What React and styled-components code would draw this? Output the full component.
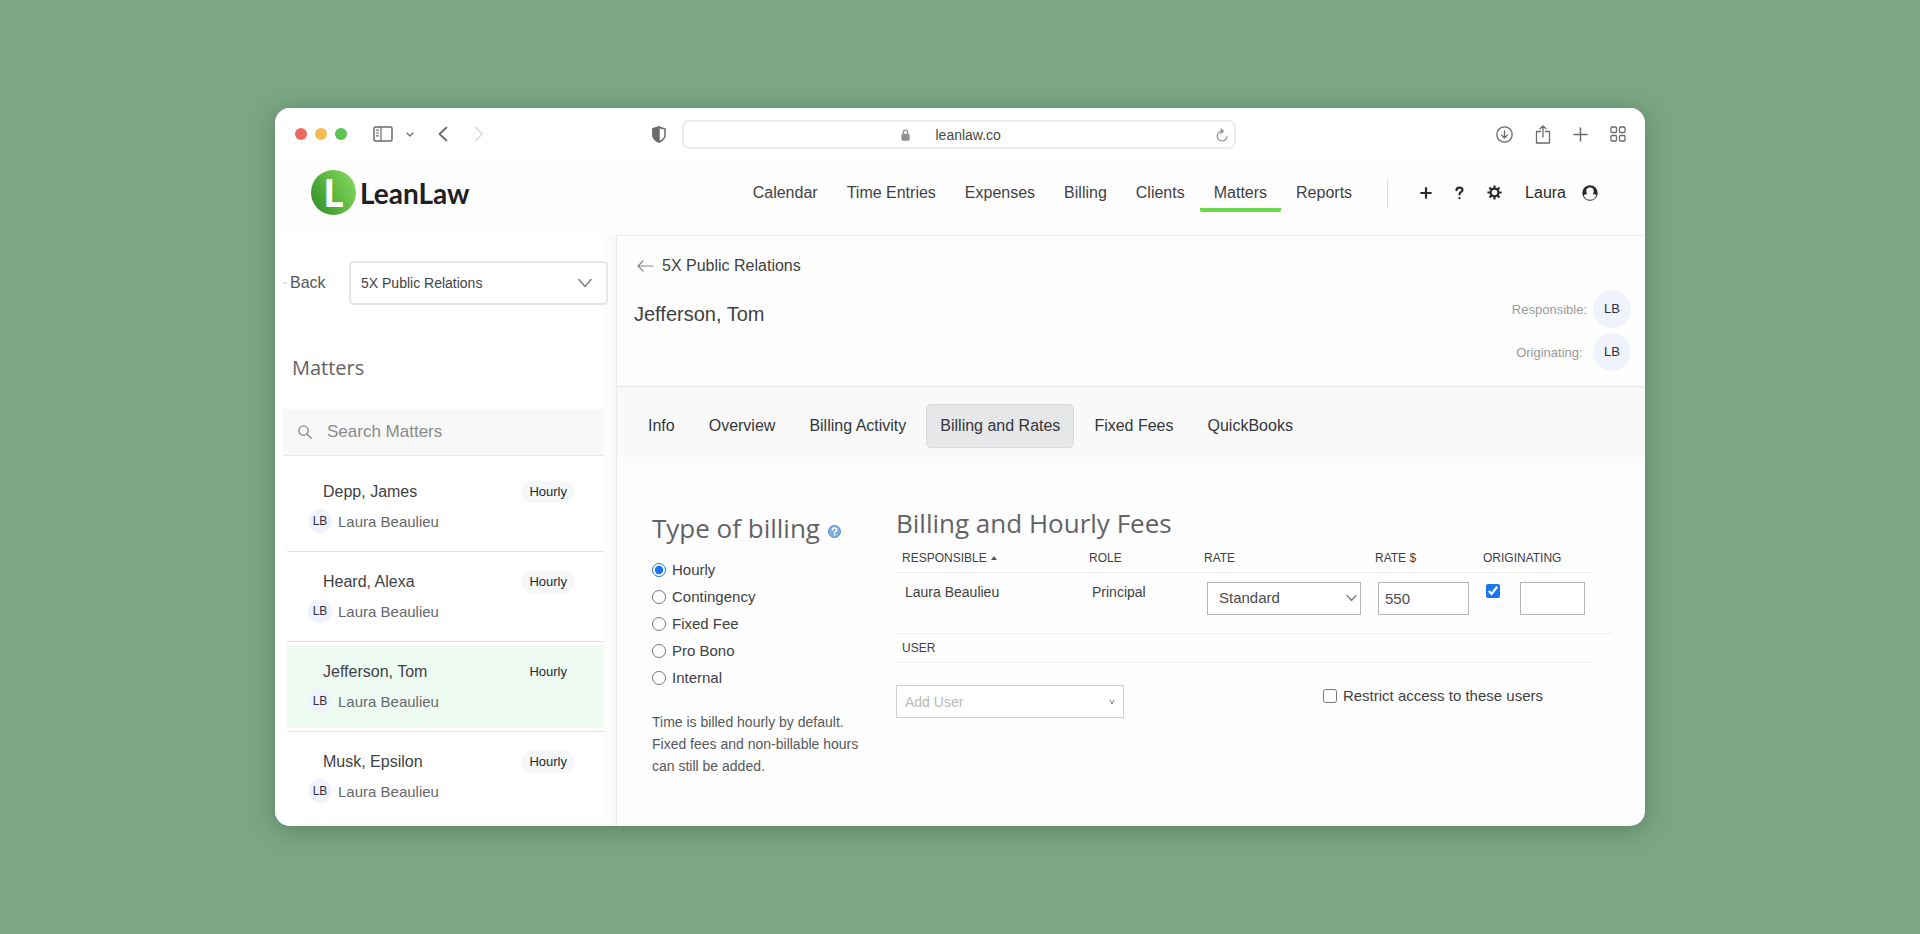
import React, { useState } from 'react';
import styled, { createGlobalStyle } from 'styled-components';

const GlobalStyle = createGlobalStyle`
  * {
    box-sizing: border-box;
  }
  body {
    margin: 0;
    background: #7ca784;
    color: #3f4144;
    font-family: 'Liberation Sans', Arial, sans-serif;
    font-size: 16px;
  }
  button, input, select {
    font: inherit;
    color: inherit;
  }
  a {
    color: inherit;
    text-decoration: none;
  }
`;

const Stage = styled.div`
  min-height: 100vh;
  padding: 108px 275px;
  @media (max-width: 1500px) {
    padding: 40px 20px;
  }
`;

const BrowserWindow = styled.div`
  display: flex;
  flex-direction: column;
  background: #fefefe;
  border-radius: 15px;
  overflow: hidden;
  box-shadow: 0 4px 24px rgba(30, 60, 38, 0.36);
`;

/* ---------- browser chrome ---------- */

const Chrome = styled.div`
  display: grid;
  grid-template-columns: 387px minmax(200px, 554px) 1fr;
  align-items: center;
  height: 52px;
  padding: 0 19px 0 20px;
  background: #fff;
  color: #6b6b6b;
`;

const ChromeLeft = styled.div`
  display: flex;
  align-items: center;
`;

const Lights = styled.div`
  display: flex;
  gap: 8px;
  margin-right: 26px;
`;

const Light = styled.span`
  width: 12px;
  height: 12px;
  border-radius: 50%;
  background: ${({ $color }) => $color};
`;

const IconButton = styled.button`
  display: flex;
  padding: 0;
  border: 0;
  background: none;
  margin-left: ${({ $space }) => $space || 0}px;
  color: ${({ $faded }) => ($faded ? '#d8d8d8' : 'inherit')};
  svg {
    display: block;
  }
`;

const ChromeShield = styled(IconButton)`
  margin-left: auto;
  margin-right: 16px;
`;

const AddressBar = styled.div`
  display: flex;
  align-items: center;
  height: 29px;
  padding: 2px 6px 0;
  border: 2px solid #ececec;
  border-radius: 7px;
  color: #8f8f8f;
`;

const AddressLabel = styled.label`
  display: flex;
  flex: 1;
  align-items: center;
  justify-content: center;
  gap: 26px;
  padding-left: 10px;
`;

const AddressInput = styled.input`
  width: 80px;
  padding: 0;
  border: 0;
  background: none;
  color: #4a4a4a;
  font-size: 14px;
`;

const ChromeRight = styled.div`
  display: flex;
  justify-content: flex-end;
  align-items: center;
  gap: 22px;
`;

/* ---------- app header ---------- */

const Header = styled.header`
  display: flex;
  align-items: center;
  justify-content: space-between;
  height: 75px;
  padding: 0 47px 10px 36px;
`;

const Brand = styled.a`
  display: flex;
  align-items: center;
  gap: 4px;
  color: #1f2022;
  font: 700 28px/42px Lato, sans-serif;
`;

const BrandMark = styled.span`
  width: 45px;
  height: 45px;
  border-radius: 50%;
  background: linear-gradient(60deg, #35922b 10%, #5cb83f 50%, #86d862 95%);
  color: #fff;
  font: 900 38px/44px Lato, sans-serif;
  text-align: center;
`;

const HeaderRight = styled.div`
  display: flex;
  align-items: center;
`;

const Nav = styled.nav`
  display: flex;
  gap: 1px;
`;

const NavLink = styled.a`
  height: 39px;
  padding: 0 14px;
  border-bottom: 4px solid ${({ $active }) => ($active ? '#6bda4b' : 'transparent')};
  border-radius: 2px;
  line-height: 39px;
`;

const Divider = styled.span`
  width: 1px;
  height: 28px;
  margin: 0 32px 0 21px;
  background: #dcdcdc;
`;

const Actions = styled.div`
  display: flex;
  align-items: center;
  gap: 23px;
  color: #2b2c2e;
`;

const UserButton = styled.button`
  display: flex;
  align-items: center;
  gap: 16px;
  padding: 0;
  border: 0;
  background: none;
`;

/* ---------- sidebar ---------- */

const Body = styled.div`
  display: grid;
  grid-template-columns: 341px minmax(0, 1fr);
  flex: 1;
`;

const Sidebar = styled.aside`
  padding: 0 12px 5px 8px;
  background: linear-gradient(90deg, #fff 326px, #f8f8f8 341px);
`;

const BackRow = styled.div`
  display: flex;
  align-items: center;
  justify-content: space-between;
  padding-top: 26px;
  margin-right: -4px;
`;

const BackLink = styled.a`
  display: flex;
  align-items: center;
  gap: 3px;
  color: #55575a;
`;

const SelectWrap = styled.span`
  position: relative;
  display: block;
  width: ${({ $width }) => $width}px;
  color: #77797b;
  svg {
    position: absolute;
    top: 50%;
    right: ${({ $inset }) => $inset}px;
    transform: translateY(-50%);
    pointer-events: none;
  }
`;

const Select = styled.select`
  display: block;
  appearance: none;
  width: 100%;
  height: 33px;
  padding: 0 11px;
  border: 1px solid #b4b4b4;
  border-radius: 0;
  background: #fff;
  color: #4b4d50;
  font-size: 15px;
`;

const ClientSelect = styled(Select)`
  height: 44px;
  padding: 0 10px;
  border: 2px solid #e8e6e6;
  border-radius: 4px;
  color: #3f4144;
  font-size: 14px;
`;

const UserSelect = styled(Select)`
  padding: 0 8px;
  border-color: #cfcfcf;
  color: #b9b9b9;
  font-size: 14px;
`;

const SidebarTitle = styled.h2`
  margin: 49px 0 27px 9px;
  color: #626262;
  font: 400 20px/28px 'Open Sans', sans-serif;
`;

const SearchBox = styled.label`
  display: flex;
  align-items: center;
  gap: 15px;
  height: 47px;
  padding: 0 15px;
  border-bottom: 1px solid #e8e8e8;
  background: #f8f8f8;
  color: #8a8a8a;
`;

const SearchInput = styled.input`
  flex: 1;
  min-width: 0;
  padding: 0;
  border: 0;
  background: none;
  font-size: 17px;
  &::placeholder {
    color: #8a8a8a;
    opacity: 1;
  }
`;

const MatterList = styled.ul`
  margin: 6px 0 0 4px;
  padding: 0;
  list-style: none;
`;

const MatterItem = styled.li`
  padding: 3px 0;
  border-bottom: 1px solid #e2e2e2;
  &:last-child {
    border-bottom: 0;
  }
`;

const MatterLink = styled.a`
  display: flex;
  flex-direction: column;
  gap: 5px;
  height: 83px;
  padding: 15px 29px 0 21px;
  background: ${({ $active }) => ($active ? '#eefbf3' : 'transparent')};
`;

const MatterTop = styled.span`
  display: flex;
  align-items: center;
  justify-content: space-between;
  height: 24px;
  padding-left: 15px;
`;

const Pill = styled.span`
  padding: 0 8px;
  border-radius: 11px;
  background: ${({ $active }) => ($active ? 'transparent' : '#f6f7f8')};
  color: #232933;
  font-size: 13px;
  line-height: 22px;
`;

const MatterOwner = styled.span`
  display: flex;
  align-items: center;
  gap: 6px;
  color: #66686b;
  font-size: 15px;
`;

const Avatar = styled.span`
  flex: none;
  width: ${({ $size }) => $size}px;
  border-radius: 50%;
  background: #f0f3fc;
  color: #2c3140;
  font-size: ${({ $size }) => ($size > 30 ? 13 : 12)}px;
  line-height: ${({ $size }) => $size}px;
  text-align: center;
`;

/* ---------- main panel ---------- */

const Main = styled.main`
  border-left: 1px solid #ebebeb;
`;

const DetailHead = styled.section`
  display: flex;
  justify-content: space-between;
  height: 152px;
  padding: 19px 8px 0 17px;
  border-top: 1px solid #ebebeb;
  border-bottom: 1px solid #e6e6e6;
`;

const Crumb = styled.a`
  display: flex;
  align-items: center;
  gap: 8px;
  padding-left: 3px;
  line-height: 22px;
`;

const Title = styled.h1`
  margin: 24px 0 0;
  font-size: 20px;
  font-weight: 400;
  line-height: 26px;
`;

const People = styled.dl`
  display: grid;
  grid-template-columns: auto auto;
  align-content: start;
  align-items: center;
  justify-items: center;
  gap: 5px 6px;
  margin: 35px 6px 0 0;
  color: #999;
  font-size: 13px;
  dd {
    display: flex;
    margin: 0;
  }
`;

const Tabs = styled.div`
  display: flex;
  gap: 6px;
  padding: 17px 17px 20px;
  background: linear-gradient(#f9f9f9 66px, #fefefe);
`;

const Tab = styled.button`
  height: 44px;
  padding: 0 13px;
  border: 1px solid ${({ $active }) => ($active ? '#d7dadc' : 'transparent')};
  border-radius: 5px;
  background: ${({ $active }) => ($active ? '#e6e7e9' : 'transparent')};
  color: #34363a;
  white-space: nowrap;
`;

const Content = styled.div`
  display: grid;
  grid-template-columns: 214px minmax(0, 1fr);
  gap: 30px;
  padding: 37px 33px 46px 35px;
`;

const BillingType = styled.fieldset`
  min-width: 0;
  margin: 0;
  padding: 5px 0 0;
  border: 0;
`;

const SectionTitle = styled.h2`
  display: flex;
  align-items: baseline;
  gap: 8px;
  margin: 0;
  color: #626366;
  font: 400 26px/36px 'Open Sans', sans-serif;
`;

const Radios = styled.div`
  padding: 10px 0 20px;
`;

const Choice = styled.label`
  display: flex;
  align-items: center;
  gap: 6px;
  height: 27px;
  font-size: 15px;
  input {
    width: 14px;
    height: 14px;
    margin: 0;
    accent-color: #1a75f0;
  }
`;

const AccessChoice = styled(Choice)`
  height: 21px;
`;

const Note = styled.p`
  margin: 0;
  color: #56585b;
  font-size: 14px;
  line-height: 22px;
`;

const TableWrap = styled.div`
  padding: 3px 20px 0 0;
  border-bottom: 1px solid #eee;
`;

const RatesTable = styled.table`
  width: 100%;
  table-layout: fixed;
  border-collapse: collapse;
  font-size: 14px;
  th {
    width: 115px;
    height: 28px;
    padding: 0 6px;
    border-bottom: 1px solid #eee;
    font-size: 12px;
    font-weight: 400;
    text-align: left;
    white-space: nowrap;
  }
  th:first-child {
    width: auto;
  }
  th:nth-child(3) {
    width: 171px;
  }
  th:nth-child(4) {
    width: 108px;
  }
  td {
    height: 61px;
    padding: 9px 0 0 9px;
    line-height: 20px;
    vertical-align: top;
  }
`;

const SortMark = styled.span`
  display: inline-block;
  margin-left: 4px;
  border: 3px solid transparent;
  border-top: 0;
  border-bottom: 4px solid #555;
  vertical-align: 2px;
`;

const TextField = styled.input`
  width: ${({ $width }) => $width}px;
  height: 33px;
  padding: 0 6px;
  border: 1px solid #b4b4b4;
  background: #fff;
  color: #4b4d50;
  font-size: 15px;
`;

const OriginatingCell = styled.div`
  display: flex;
  align-items: flex-start;
  justify-content: space-between;
  padding-right: 7px;
`;

const CheckBox = styled.input`
  width: 14px;
  height: 14px;
  margin: 2px 0 0;
  accent-color: #1a75f0;
`;

const UserHead = styled.h3`
  margin: 0 20px 22px 0;
  padding-left: 6px;
  border-bottom: 1px solid #eee;
  font-size: 12px;
  font-weight: 400;
  line-height: 28px;
`;

const AccessRow = styled.div`
  display: flex;
  align-items: flex-start;
  justify-content: space-between;
  padding-right: 69px;
`;

/* ---------- icons ---------- */

const Icon = ({ w, h, sw = 1.5, children }) => (
  <svg
    width={w}
    height={h}
    viewBox={`0 0 ${w} ${h}`}
    fill="none"
    stroke="currentColor"
    strokeWidth={sw}
    strokeLinecap="round"
    strokeLinejoin="round"
    aria-hidden="true"
  >
    {children}
  </svg>
);

const SidebarIcon = () => (
  <Icon w={20} h={16}>
    <rect x="1" y="1" width="18" height="14" rx="1.500" />
    <path d="M8 1v14M3.500 4.200h2M3.500 7h2M3.500 9.800h2" strokeWidth="1.200" />
  </Icon>
);

const DownChevron = ({ w = 14, h = 9, sw = 1.4 }) => (
  <Icon w={w} h={h} sw={sw}>
    <path d={`M1 1L${w / 2} ${h - 1}L${w - 1} 1`} />
  </Icon>
);

const ShieldIcon = () => (
  <Icon w={14} h={17}>
    <path d="M7 1C5.400 2 3 2.600 1 2.700V9c0 3.500 3 5.800 6 7 3-1.200 6-3.500 6-7V2.700C11 2.600 8.600 2 7 1z" />
    <path d="M7 1C5.400 2 3 2.600 1 2.700V9c0 3.500 3 5.800 6 7z" fill="currentColor" />
  </Icon>
);

const LockIcon = () => (
  <Icon w={9} h={12} sw={1.3}>
    <rect x="1" y="5.500" width="7" height="5.500" rx="1" fill="currentColor" />
    <path d="M2.300 5V3.300a2.200 2.200 0 0 1 4.400 0V5" />
  </Icon>
);

const ReloadIcon = () => (
  <Icon w={12} h={14} sw={1.2}>
    <path d="M6.500 3.200A4.900 4.900 0 1 0 11 8M4.800 1l2.500 2.200-2.500 2.300" />
  </Icon>
);

const DownloadIcon = () => (
  <Icon w={17} h={17} sw={1.3}>
    <circle cx="8.500" cy="8.500" r="7.700" />
    <path d="M8.500 4.700v7.300M5.700 9.300l2.800 2.800 2.800-2.800" />
  </Icon>
);

const ShareIcon = () => (
  <Icon w={16} h={19} sw={1.3}>
    <path d="M5.500 6.500H1.500V18h13V6.500h-4M8 12V1M5 3.800L8 1l3 2.800" />
  </Icon>
);

const GridIcon = () => (
  <Icon w={16} h={16} sw={1.3}>
    <rect x="1" y="1" width="5.500" height="5.500" rx="1" />
    <rect x="9.500" y="1" width="5.500" height="5.500" rx="1" />
    <rect x="1" y="9.500" width="5.500" height="5.500" rx="1" />
    <rect x="9.500" y="9.500" width="5.500" height="5.500" rx="1" />
  </Icon>
);

const GearIcon = () => (
  <Icon w={15} h={15} sw={2.2}>
    <circle cx="7.500" cy="7.500" r="3.900" />
    {[0, 45, 90, 135, 180, 225, 270, 315].map((deg) => (
      <path key={deg} d="M7.500 3.500V.4" strokeLinecap="butt" transform={`rotate(${deg} 7.500 7.500)`} />
    ))}
  </Icon>
);

const HelpIcon = () => (
  <Icon w={9} h={14} sw={2.2}>
    <path d="M1.500 4.200C1.500 2.500 2.800 1.600 4.500 1.600s3 .9 3 2.400c0 2-3 2-3 4.400" />
    <path d="M4.500 12v.2" />
  </Icon>
);

const ProfileIcon = () => (
  <svg width="16" height="16" viewBox="0 0 16 16" aria-hidden="true">
    <circle cx="8" cy="8" r="7.700" fill="#2b2c2e" />
    <circle cx="8" cy="6.200" r="3.700" fill="#fdfdfd" />
    <path d="M1.700 9.900C4 8.600 12 8.600 14.300 9.900A6.500 6.500 0 0 1 1.700 9.900z" fill="#fdfdfd" />
  </svg>
);

const HintIcon = () => (
  <svg width="13" height="13" viewBox="0 0 13 13" fill="none" aria-hidden="true">
    <circle cx="6.500" cy="6.500" r="6" fill="#7fb0ea" stroke="#4a88d2" />
    <path d="M4.300 5c0-1.400 1-2 2.200-2s2.200.7 2.200 1.900c0 1.400-2 1.400-2 2.900M6.700 9.600v.4" stroke="#fff" strokeWidth="1.500" strokeLinecap="round" />
  </svg>
);

/* ---------- data ---------- */

const navItems = ['Calendar', 'Time Entries', 'Expenses', 'Billing', 'Clients', 'Matters', 'Reports'];
const matters = ['Depp, James', 'Heard, Alexa', 'Jefferson, Tom', 'Musk, Epsilon'];
const tabItems = ['Info', 'Overview', 'Billing Activity', 'Billing and Rates', 'Fixed Fees', 'QuickBooks'];
const billingTypes = ['Hourly', 'Contingency', 'Fixed Fee', 'Pro Bono', 'Internal'];

const BrowserChrome = () => (
  <Chrome>
    <ChromeLeft>
      <Lights>
        <Light $color="#ee6a5f" />
        <Light $color="#f5bd4f" />
        <Light $color="#5ac351" />
      </Lights>
      <IconButton aria-label="Show sidebar"><SidebarIcon /></IconButton>
      <IconButton aria-label="Sidebar options" $space={13}><DownChevron w={8} h={5} sw={1.2} /></IconButton>
      <IconButton aria-label="Back" $space={24}>
        <Icon w={10} h={16} sw={1.8}><path d="M8.500 1.500L1.500 8l7 6.500" /></Icon>
      </IconButton>
      <IconButton aria-label="Forward" $space={26} $faded>
        <Icon w={10} h={16}><path d="M1.500 1.500l7 6.500-7 6.500" /></Icon>
      </IconButton>
      <ChromeShield aria-label="Privacy report"><ShieldIcon /></ChromeShield>
    </ChromeLeft>
    <AddressBar>
      <AddressLabel>
        <LockIcon />
        <AddressInput aria-label="Address" defaultValue="leanlaw.co" />
      </AddressLabel>
      <IconButton aria-label="Reload"><ReloadIcon /></IconButton>
    </AddressBar>
    <ChromeRight>
      <IconButton aria-label="Downloads"><DownloadIcon /></IconButton>
      <IconButton aria-label="Share"><ShareIcon /></IconButton>
      <IconButton aria-label="New tab">
        <Icon w={15} h={15}><path d="M7.500 1v13M1 7.500h13" /></Icon>
      </IconButton>
      <IconButton aria-label="Tab overview"><GridIcon /></IconButton>
    </ChromeRight>
  </Chrome>
);

const AppHeader = () => (
  <Header>
    <Brand href="#home">
      <BrandMark>L</BrandMark>
      LeanLaw
    </Brand>
    <HeaderRight>
      <Nav>
        {navItems.map((item) => (
          <NavLink key={item} href="#nav" $active={item === 'Matters'}>{item}</NavLink>
        ))}
      </Nav>
      <Divider />
      <Actions>
        <IconButton aria-label="Add">
          <Icon w={12} h={12} sw={2.2}><path d="M6 1.200v9.600M1.200 6h9.600" /></Icon>
        </IconButton>
        <IconButton aria-label="Help"><HelpIcon /></IconButton>
        <IconButton aria-label="Settings"><GearIcon /></IconButton>
        <UserButton>
          Laura
          <ProfileIcon />
        </UserButton>
      </Actions>
    </HeaderRight>
  </Header>
);

const MattersSidebar = () => (
  <Sidebar>
    <BackRow>
      <BackLink href="#back">
        <Icon w={4} h={2} sw={1}><path d="M0 1h4" stroke="#ccc" /></Icon>
        Back
      </BackLink>
      <SelectWrap $width={259} $inset={16}>
        <ClientSelect aria-label="Client">
          <option>5X Public Relations</option>
        </ClientSelect>
        <DownChevron />
      </SelectWrap>
    </BackRow>
    <SidebarTitle>Matters</SidebarTitle>
    <SearchBox>
      <Icon w={14} h={14} sw={1.4}>
        <circle cx="5.500" cy="5.500" r="4.600" />
        <path d="M9 9l4.200 4.200" />
      </Icon>
      <SearchInput placeholder="Search Matters" aria-label="Search Matters" />
    </SearchBox>
    <MatterList>
      {matters.map((name) => {
        const active = name === 'Jefferson, Tom';
        return (
          <MatterItem key={name}>
            <MatterLink href="#matter" $active={active}>
              <MatterTop>
                {name}
                <Pill $active={active}>Hourly</Pill>
              </MatterTop>
              <MatterOwner>
                <Avatar $size={24}>LB</Avatar>
                Laura Beaulieu
              </MatterOwner>
            </MatterLink>
          </MatterItem>
        );
      })}
    </MatterList>
  </Sidebar>
);

const BillingTypeForm = () => {
  const [type, setType] = useState('Hourly');
  return (
    <BillingType>
      <SectionTitle>
        Type of billing
        <HintIcon />
      </SectionTitle>
      <Radios>
        {billingTypes.map((item) => (
          <Choice key={item}>
            <input type="radio" name="billing-type" checked={type === item} onChange={() => setType(item)} />
            {item}
          </Choice>
        ))}
      </Radios>
      <Note>
        Time is billed hourly by default. Fixed fees and non-billable hours can still be added.
      </Note>
    </BillingType>
  );
};

const HourlyFees = () => (
  <section>
    <SectionTitle>Billing and Hourly Fees</SectionTitle>
    <TableWrap>
      <RatesTable>
        <thead>
          <tr>
            <th>RESPONSIBLE<SortMark /></th>
            <th>ROLE</th>
            <th>RATE</th>
            <th>RATE $</th>
            <th>ORIGINATING</th>
          </tr>
        </thead>
        <tbody>
          <tr>
            <td>Laura Beaulieu</td>
            <td>Principal</td>
            <td>
              <SelectWrap $width={154} $inset={4}>
                <Select aria-label="Rate">
                  <option>Standard</option>
                </Select>
                <DownChevron w={11} h={7} sw={1.2} />
              </SelectWrap>
            </td>
            <td><TextField $width={91} aria-label="Rate in dollars" defaultValue="550" /></td>
            <td>
              <OriginatingCell>
                <CheckBox type="checkbox" aria-label="Originating" defaultChecked />
                <TextField $width={65} aria-label="Originating share" />
              </OriginatingCell>
            </td>
          </tr>
        </tbody>
      </RatesTable>
    </TableWrap>
    <UserHead>USER</UserHead>
    <AccessRow>
      <SelectWrap $width={228} $inset={9}>
        <UserSelect aria-label="Add User">
          <option>Add User</option>
        </UserSelect>
        <DownChevron w={6} h={6} sw={1} />
      </SelectWrap>
      <AccessChoice>
        <input type="checkbox" />
        Restrict access to these users
      </AccessChoice>
    </AccessRow>
  </section>
);

const App = () => {
  const [tab, setTab] = useState('Billing and Rates');
  return (
    <Stage>
      <GlobalStyle />
      <BrowserWindow>
        <BrowserChrome />
        <AppHeader />
        <Body>
          <MattersSidebar />
          <Main>
            <DetailHead>
              <div>
                <Crumb href="#client">
                  <Icon w={17} h={12} sw={1.2}><path d="M16 6H1M6 1L1 6l5 5" stroke="#8b8b80" /></Icon>
                  5X Public Relations
                </Crumb>
                <Title>Jefferson, Tom</Title>
              </div>
              <People>
                <dt>Responsible:</dt>
                <dd><Avatar $size={38}>LB</Avatar></dd>
                <dt>Originating:</dt>
                <dd><Avatar $size={38}>LB</Avatar></dd>
              </People>
            </DetailHead>
            <Tabs>
              {tabItems.map((item) => (
                <Tab key={item} $active={item === tab} onClick={() => setTab(item)}>{item}</Tab>
              ))}
            </Tabs>
            <Content>
              <BillingTypeForm />
              <HourlyFees />
            </Content>
          </Main>
        </Body>
      </BrowserWindow>
    </Stage>
  );
};

export default App;
